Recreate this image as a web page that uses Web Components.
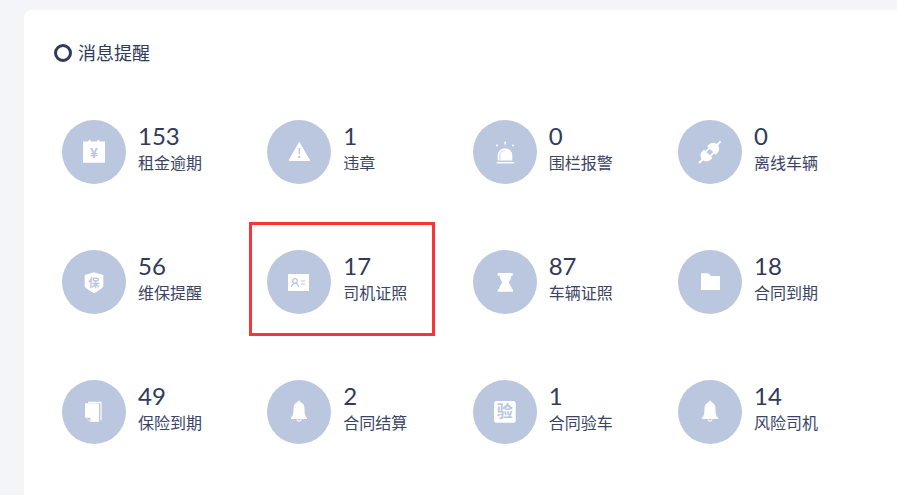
<!DOCTYPE html>
<html lang="zh-CN">
<head>
<meta charset="utf-8">
<style>
html,body{margin:0;padding:0;height:495px;overflow:hidden;background:#f3f5f9;font-family:"Noto Sans CJK SC","Noto Sans",sans-serif;color:#303a5a}
</style>
</head>
<body>
<notice-page>
  <notice-card heading="消息提醒">
    <stat-item value="153" label="租金逾期" icon="calendar"></stat-item>
    <stat-item value="1" label="违章" icon="warning"></stat-item>
    <stat-item value="0" label="围栏报警" icon="alarm"></stat-item>
    <stat-item value="0" label="离线车辆" icon="plug"></stat-item>
    <stat-item value="56" label="维保提醒" icon="shield"></stat-item>
    <stat-item value="17" label="司机证照" icon="card" marked></stat-item>
    <stat-item value="87" label="车辆证照" icon="hourglass"></stat-item>
    <stat-item value="18" label="合同到期" icon="folder"></stat-item>
    <stat-item value="49" label="保险到期" icon="docs"></stat-item>
    <stat-item value="2" label="合同结算" icon="bell"></stat-item>
    <stat-item value="1" label="合同验车" icon="check"></stat-item>
    <stat-item value="14" label="风险司机" icon="bell"></stat-item>
  </notice-card>
</notice-page>
<script>
const C='#bbc6df';
const ICONS={
calendar:`<svg viewBox="0 0 64 64" width="64" height="64"><path fill="#fff" d="M21 21.500h5.500v-1.500h2v1.500h7v-1.500h2v1.500H43v21.200H21z"/><text x="32" y="38" text-anchor="middle" font-size="14" font-weight="700" fill="${C}" font-family="Liberation Sans">¥</text></svg>`,
warning:`<svg viewBox="0 0 64 64" width="64" height="64"><path fill="#fff" d="M32.300 22.500 42.600 40.500H22z" stroke="#fff" stroke-width="1" stroke-linejoin="round"/><path fill="${C}" d="M31.500 28h1.600l-.3 6.500h-1zM31.300 36h2v2h-2z"/></svg>`,
alarm:`<svg viewBox="0 0 64 64" width="64" height="64"><path fill="#fff" d="M24.700 40.500v-5a7.300 7.300 0 0 1 14.600 0v5z"/><path fill="${C}" d="M27.700 40v-5.500a3 3 0 0 1 3-3h.5v-1h-.6a4.500 4.500 0 0 0-4.400 4.500v5.500z" opacity=".5"/><rect x="23.700" y="42" width="17.600" height="1.400" fill="#fff"/><rect x="31.400" y="21.500" width="1.400" height="3" fill="#fff"/><circle cx="24" cy="25.500" r="1" fill="#fff"/><circle cx="40" cy="25.500" r="1" fill="#fff"/></svg>`,
plug:`<svg viewBox="0 0 64 64" width="64" height="64"><g fill="#fff" transform="rotate(45 32 32)"><path d="M26 30v-2.500a6 6 0 0 1 12 0V30z"/><rect x="31" y="17" width="2" height="5"/><path d="M26 34.500v2.500a6 6 0 0 0 12 0v-2.500z"/><rect x="31" y="42.500" width="2" height="5"/><rect x="28" y="29.500" width="1.700" height="5.500"/><rect x="34.300" y="29.500" width="1.700" height="5.500"/></g></svg>`,
shield:`<svg viewBox="0 0 64 64" width="64" height="64"><path fill="#fff" d="M32 22.300 41.300 25v11Q41 38.500 32 43.300 23 38.500 22.700 36V25z"/><text x="32" y="37" text-anchor="middle" font-size="11" font-weight="700" fill="${C}" font-family="Noto Sans CJK SC">保</text></svg>`,
card:`<svg viewBox="0 0 64 64" width="64" height="64"><rect x="21" y="24" width="21" height="17" fill="#fff"/><circle cx="28" cy="31" r="2.300" fill="none" stroke="${C}" stroke-width="1.200"/><path fill="none" stroke="${C}" stroke-width="1.200" d="M24.500 37c.4-2.700 1.700-3.700 3.500-3.700s3.100 1 3.500 3.700"/><path stroke="${C}" stroke-width="1.200" d="M34 31h4M34 34h4"/></svg>`,
hourglass:`<svg viewBox="0 0 64 64" width="64" height="64"><path fill="#fff" d="M24.700 23h15v2.700h-1.500v2.300l-2.500 4.300 2.500 4.200.8 2.800h1v2.400H24.700v-2.400h1.300l.8-2.800 2.500-4.200-2.500-4.300v-2.300h-2.100z"/></svg>`,
folder:`<svg viewBox="0 0 64 64" width="64" height="64"><path fill="#fff" d="M23 23.300h7.300l2.700 2.700h9v14H23z"/></svg>`,
docs:`<svg viewBox="0 0 64 64" width="64" height="64"><path fill="#fff" d="M23 23.300h14v18.400H28L23 37z"/><path fill="${C}" d="m24 37.800 4.500 0 0 3.400z"/><path fill="none" stroke="#fff" stroke-width="1.200" d="M26 22.300h13v18"/></svg>`,
bell:`<svg viewBox="0 0 64 64" width="64" height="64"><path fill="#fff" d="M32 20.700c.9 0 1.500.6 1.600 1.500 2.700.8 3.900 3.400 3.900 6.300 0 4.500.3 7.700 2.500 9.300v1.200H24v-1.200c2.200-1.600 2.500-4.800 2.500-9.300 0-2.900 1.200-5.500 3.900-6.300.1-.9.700-1.500 1.600-1.500z"/><path fill="none" stroke="#fff" stroke-width="1.100" d="M29.700 39.400a2.400 2.400 0 0 0 4.600 0"/></svg>`,
check:`<svg viewBox="0 0 64 64" width="64" height="64"><rect x="21" y="21" width="21.700" height="21.700" rx="2.500" fill="#fff"/><text x="31.800" y="37.300" text-anchor="middle" font-size="16" font-weight="700" fill="${C}" font-family="Noto Sans CJK SC">验</text></svg>`
};
function def(name,css,html){
  customElements.define(name,class extends HTMLElement{
    constructor(){super();this.attachShadow({mode:'open'});}
    connectedCallback(){
      this.shadowRoot.innerHTML=`<style>${css}</style>`+html(this);
    }
  });
}
def('notice-page',':host{display:block;padding:10px 0 0 24px;width:1000px;box-sizing:border-box}',()=>`<slot></slot>`);
def('notice-card',`
:host{display:block;background:#fff;border-radius:8px 0 0 0;height:500px;padding:28px 0 0 30px;box-sizing:border-box}
h2{margin:0;display:flex;align-items:center;gap:6px;font-size:18px;font-weight:400;line-height:28px;color:#303a5a}
i{display:block;width:18px;height:18px;border:3.500px solid #303a5a;border-radius:50%;box-sizing:border-box;margin-top:2px}
.grid{display:grid;grid-template-columns:repeat(4,205.330px);grid-auto-rows:130px;padding:54px 0 0 8px}
`,h=>`<h2><i></i>${h.getAttribute('heading')}</h2><div class="grid"><slot></slot></div>`);
def('stat-item',`
:host{display:flex;gap:12px;height:64px;position:relative;align-items:flex-start}
.c{width:64px;height:64px;border-radius:50%;background:${C};flex:none}
svg{display:block}
.n{font-family:Lato,"Noto Sans",sans-serif;font-size:24px;line-height:28px;color:#303a5a;margin-top:2px}
.l{font-size:16px;line-height:20px;color:#3a4463;margin-top:2px}
.mark{position:absolute;left:-18px;top:-28px;width:186px;height:114px;border:3px solid #f93535;box-sizing:border-box}
`,h=>`<div class="c">${ICONS[h.getAttribute('icon')]}</div><div><div class="n">${h.getAttribute('value')}</div><div class="l">${h.getAttribute('label')}</div></div>${h.hasAttribute('marked')?'<div class="mark"></div>':''}`);
</script>
</body>
</html>
